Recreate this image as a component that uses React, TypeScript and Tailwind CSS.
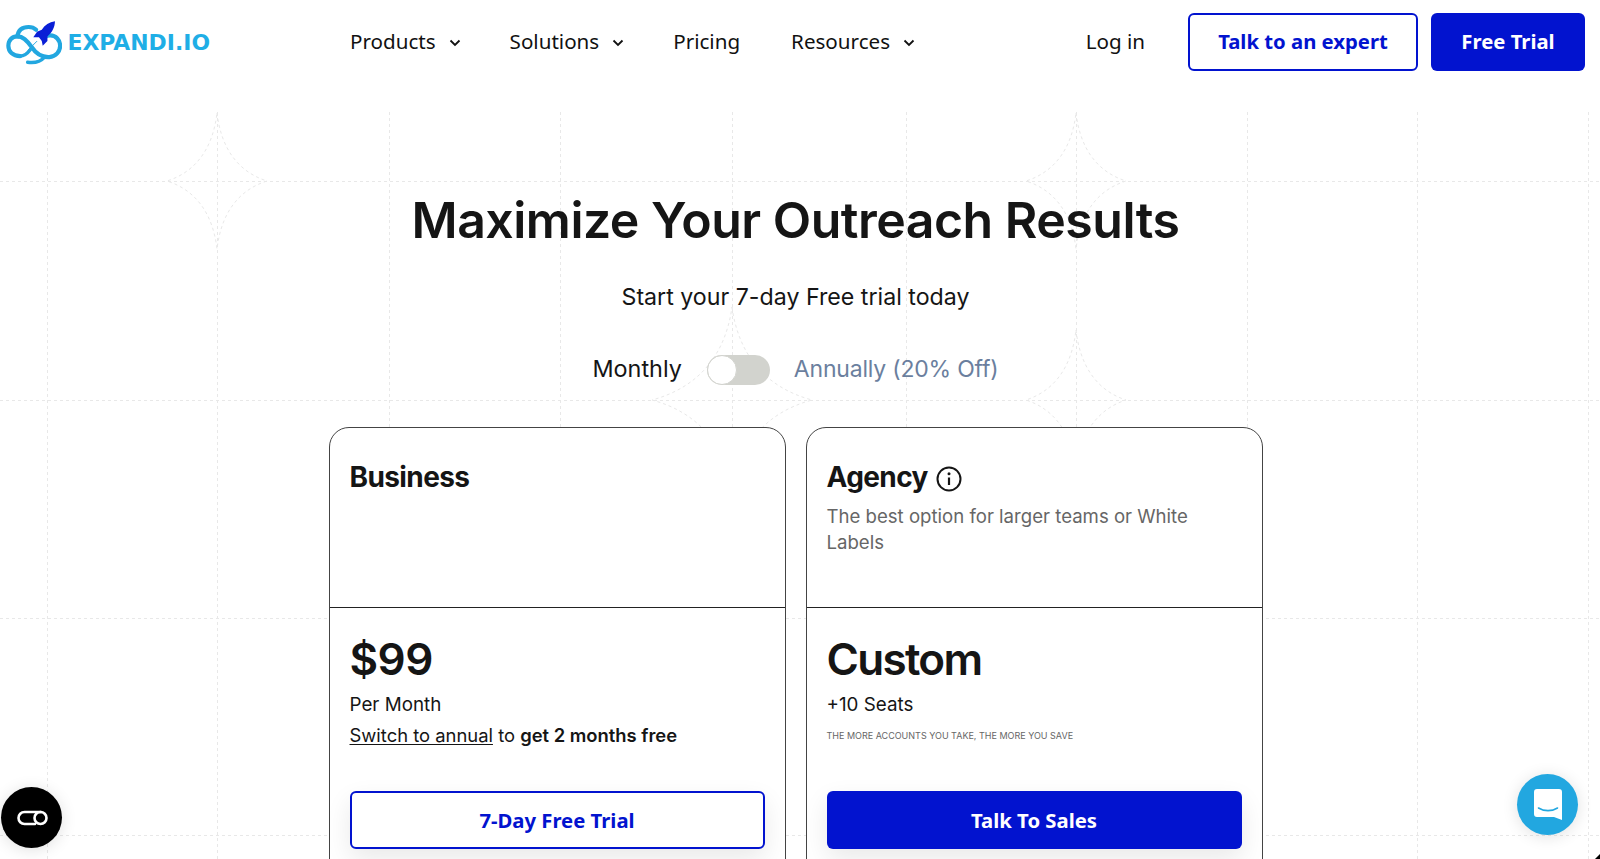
import React from "react";

const verticals = [47, 217, 389, 560, 732, 906, 1076, 1247, 1417, 1588];
const horizontals = [181, 400, 618, 835];
const stars: [number, number, number, number][] = [
  [217, 181, 50, 68],
  [1076, 181, 50, 68],
  [732, 400, 80, 93],
  [1076, 400, 50, 70],
];

function Backdrop() {
  return (
    <svg className="absolute left-0 top-[105px]" width="1600" height="754" viewBox="0 105 1600 754" fill="none" stroke="#e8e8e8" strokeWidth="1" strokeDasharray="3 3">
      {verticals.map((x) => <line key={x} x1={x + 0.5} y1="112" x2={x + 0.5} y2="859" />)}
      {horizontals.map((y) => <line key={y} x1="0" y1={y + 0.5} x2="1600" y2={y + 0.5} />)}
      {stars.map(([x, y, w, h]) => (
        <path key={`${x}-${y}`} d={`M${x} ${y - h}C${x + w * 0.08} ${y - h * 0.5} ${x + w * 0.4} ${y - h * 0.14} ${x + w} ${y}C${x + w * 0.4} ${y + h * 0.14} ${x + w * 0.08} ${y + h * 0.5} ${x} ${y + h}C${x - w * 0.08} ${y + h * 0.5} ${x - w * 0.4} ${y + h * 0.14} ${x - w} ${y}C${x - w * 0.4} ${y - h * 0.14} ${x - w * 0.08} ${y - h * 0.5} ${x} ${y - h}Z`} />
      ))}
    </svg>
  );
}

function Logo() {
  return (
    <div className="flex w-[204px] items-center">
      <svg width="57" height="45" viewBox="0 0 60 47" fill="none">
        <path d="M15 38C7 38 2.5 33 2.5 27C2.5 21 6.5 17 12 17C13 10 18 7 24 7C27 7 30 8 32 10" stroke="#22a7e0" strokeWidth="4.4" strokeLinecap="round" />
        <path d="M12 17C18 17 22 21 27 28C31 34 37 39.5 46 39C53 38.5 57.5 33 57.5 27C57.5 21 53 16 47 16C45 16 43 16.5 41 18" stroke="#22a7e0" strokeWidth="4.4" strokeLinecap="round" />
        <path d="M15 38C19 38 23 35 26 31M23 44.5C30 45.5 37 43.5 41 39" stroke="#22a7e0" strokeWidth="3.6" strokeLinecap="round" />
        <path d="M52 1C46 2 41 5 38 10L33 12L29 18L35 18L38 22L39 27L44 22L44 17C49 13 52 7 52 1Z" fill="#0a1fd6" />
        <path d="M33 22L23 32" stroke="#22a7e0" strokeWidth="1" />
      </svg>
      <span className="ml-[5px] mt-[2px] text-[21.9px] font-bold leading-none text-[#1faee6] [font-family:'DejaVu_Sans',sans-serif]">EXPANDI.IO</span>
    </div>
  );
}

function NavItem({ label, chevron = true }: { label: string; chevron?: boolean }) {
  return (
    <div className={`flex items-center gap-[13px] ${chevron ? "" : "mr-[2px]"}`}>
      <span>{label}</span>
      {chevron && (
        <svg width="12" height="8" viewBox="0 0 12 8" fill="none" className="mt-[5px]">
          <path d="M1.5 1.5L6 6L10.5 1.5" stroke="#111" strokeWidth="1.8" />
        </svg>
      )}
    </div>
  );
}

function Header() {
  return (
    <header className="relative flex h-[84px] items-center pl-[6px] pr-[15px] [font-family:'Noto_Sans',sans-serif]">
      <Logo />
      <nav className="ml-[140px] flex items-center gap-[49px] pb-[2px] text-[20.6px] text-[#111]">
        <NavItem label="Products" />
        <NavItem label="Solutions" />
        <NavItem label="Pricing" chevron={false} />
        <NavItem label="Resources" />
      </nav>
      <span className="ml-auto pb-[2px] text-[20.6px] text-[#111]">Log in</span>
      <a className="ml-[43px] flex h-[58px] w-[230px] items-center justify-center rounded-[6px] border-2 border-[#0213cf] pb-[2px] text-[20.3px] font-bold text-[#0213cf]">Talk to an expert</a>
      <a className="ml-[13px] flex h-[58px] w-[154px] items-center justify-center rounded-[6px] bg-[#0213cf] pb-[2px] text-[20.3px] font-bold text-white">Free Trial</a>
    </header>
  );
}

function Card({ title, info, desc, price, priceClass, sub, extra, cta, filled }: { title: string; info?: boolean; desc?: string; price: string; priceClass: string; sub: string; extra: React.ReactNode; cta: string; filled?: boolean }) {
  return (
    <div className="flex h-[460px] w-[457px] flex-col rounded-t-[20px] border border-[#444] bg-white">
      <div className="h-[180px] border-b border-[#222] px-[20px] pt-[31px]">
        <div className="flex items-center gap-[7px]">
          <h2 className="text-[28px] font-bold leading-[36px] tracking-[-0.6px] text-[#151515]">{title}</h2>
          {info && (
            <svg width="28" height="28" viewBox="0 0 28 28" fill="none" className="mt-[3px]">
              <circle cx="14" cy="14" r="11.5" stroke="#151515" strokeWidth="2" />
              <path d="M14 12.5V20" stroke="#151515" strokeWidth="2.2" />
              <circle cx="14" cy="8.8" r="1.5" fill="#151515" />
            </svg>
          )}
        </div>
        {desc && <p className="mt-[9px] text-[18.6px] leading-[25.5px] text-[#666]">{desc}</p>}
      </div>
      <div className="px-[20px] pt-[24px]">
        <div className={`text-[44px] font-semibold leading-[54px] text-[#151515] ${priceClass}`}>{price}</div>
        <div className="mt-[6px] text-[18.8px] leading-[26px] text-[#151515]">{sub}</div>
        <div className="mt-[5px] flex h-[26px] items-center">{extra}</div>
        <a className={`mt-[42px] flex h-[58px] items-center justify-center rounded-[6px] text-[20.3px] font-bold shadow-[0_10px_26px_rgba(0,0,0,0.09)] [font-family:'Noto_Sans',sans-serif] ${filled ? "bg-[#0213cf] text-white" : "border-2 border-[#0213cf] bg-white text-[#0213cf]"}`}>{cta}</a>
      </div>
    </div>
  );
}

export default function App() {
  return (
    <div className="relative h-[859px] w-[1600px] overflow-hidden bg-white [font-family:Inter,sans-serif]">
      <Backdrop />
      <Header />
      <main className="relative flex flex-col items-center pr-[9px]">
        <h1 className="mt-[100px] text-[50px] font-semibold leading-[72px] tracking-[-0.5px] text-[#151515]">Maximize Your Outreach Results</h1>
        <p className="mt-[26px] text-[23.2px] leading-[30px] text-[#151515]">Start your 7-day Free trial today</p>
        <div className="mt-[41px] flex h-[34px] items-center text-[23px]">
          <span className="pb-[2px] text-[23.4px] text-[#151515]">Monthly</span>
          <div className="ml-[25px] h-[30px] w-[63px] rounded-full bg-[#d2d3ce]">
            <div className="h-[30px] w-[30px] rounded-full border border-[#d2d3ce] bg-white" />
          </div>
          <span className="ml-[24px] pb-[2px] tracking-[-0.2px] text-[#6b7f9e]">Annually (20% Off)</span>
        </div>
        <div className="mt-[40px] flex gap-[20px]">
          <Card
            title="Business"
            price="$99"
            priceClass="tracking-[-0.5px]"
            sub="Per Month"
            extra={<p className="text-[18.4px] text-[#151515]"><span className="underline underline-offset-2">Switch to annual</span> to <b className="font-semibold">get 2 months free</b></p>}
            cta="7-Day Free Trial"
          />
          <Card
            title="Agency"
            info
            desc="The best option for larger teams or White Labels"
            price="Custom"
            priceClass="tracking-[-1.7px]"
            sub="+10 Seats"
            extra={<p className="text-[9px] text-[#666]">THE MORE ACCOUNTS YOU TAKE, THE MORE YOU SAVE</p>}
            cta="Talk To Sales"
            filled
          />
        </div>
      </main>
      <div className="absolute left-[1px] top-[787px] flex h-[61px] w-[61px] items-center justify-center rounded-full bg-black shadow-[0_2px_16px_rgba(0,0,0,0.12)]">
        <svg width="32" height="16" viewBox="0 0 32 16" fill="none">
          <path d="M25 2H8.5A6 6 0 0 0 8.5 14H19" stroke="#fff" strokeWidth="2.6" strokeLinecap="round" />
          <circle cx="24.5" cy="8" r="6" stroke="#fff" strokeWidth="2.6" />
        </svg>
      </div>
      <div className="absolute left-[1517px] top-[774px] flex h-[61px] w-[61px] items-center justify-center rounded-full bg-[#22a7e0] shadow-[0_2px_16px_rgba(0,0,0,0.12)]">
        <svg width="28" height="31" viewBox="0 0 28 31" fill="none">
          <path d="M3 0H25A3 3 0 0 1 28 3V31L20 28H3A3 3 0 0 1 0 25V3A3 3 0 0 1 3 0Z" fill="#fff" />
          <path d="M4.5 19C10 22.5 18 22.5 23.5 19" stroke="#22a7e0" strokeWidth="1.6" strokeLinecap="round" />
        </svg>
      </div>
      <svg className="absolute bottom-0 right-0" width="5" height="5" viewBox="0 0 5 5">
        <path d="M5 0V5H0Z" fill="#000" />
      </svg>
    </div>
  );
}
